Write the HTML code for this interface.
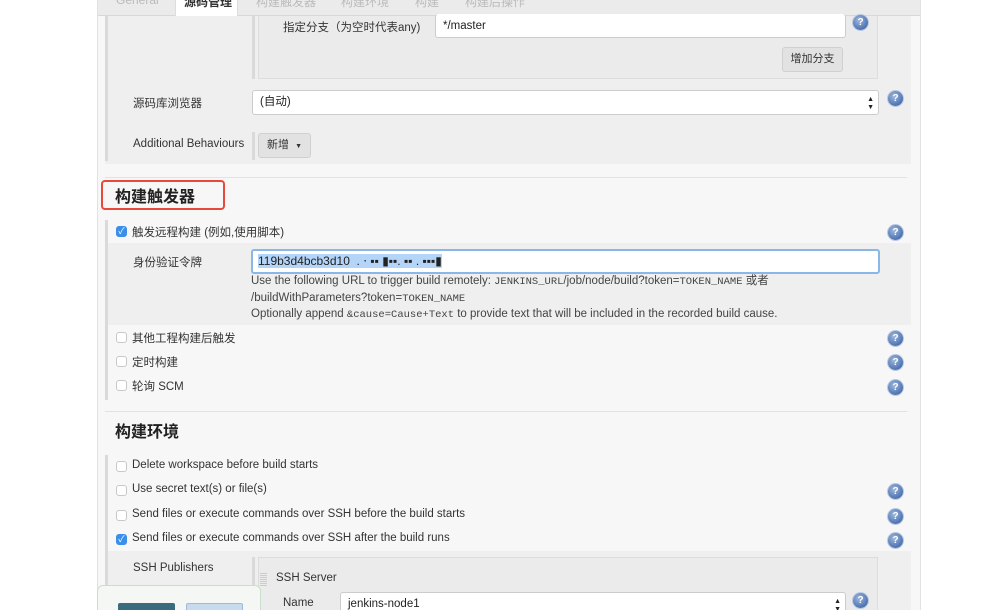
<!DOCTYPE html>
<html style="overflow:hidden;height:610px"><head><meta charset="utf-8"><style>
*{box-sizing:border-box;margin:0;padding:0}
html,body{width:1000px;height:610px;overflow:hidden}
body{background:#fff;font-family:"Liberation Sans","Noto Sans CJK SC",sans-serif;font-size:11.5px;color:#333;position:relative}
.a{position:absolute}
.help{position:absolute;width:15px;height:15px;border-radius:50%;background:radial-gradient(circle at 40% 35%,#9fb8dd,#4d73b0 70%,#3a5f9c);color:#fff;font:bold 10px/15px "Liberation Sans",sans-serif;text-align:center;box-shadow:0 0 0 1px #b9c9e3}
.cb{position:absolute;width:11px;height:11px;border:1px solid #c8c8c8;border-radius:3px;background:#fff}
.cb.on{background:#3b8fe8;border-color:#3b8fe8;color:#fff;font-size:9px;line-height:9px;text-align:center}
.inp{position:absolute;background:#fff;border:1px solid #ccc;border-radius:3px;font-size:11.5px;padding-left:7px;color:#222}
.bar{position:absolute;background:#dadada;width:3px}
.mono{font-family:"Liberation Mono",monospace;font-size:10.5px}
</style></head><body>
<div class="a" style="left:97px;top:0;width:824px;height:610px;background:#f7f7f7;border-left:1px solid #e2e2e2;border-right:1px solid #e2e2e2"></div>
<div class="a" style="left:98px;top:0;width:822px;height:16px;background:#ebebeb;border-bottom:1px solid #d8d8d8"></div>
<div class="a" style="left:175px;top:0;width:63px;height:16px;background:#fff;border-left:1px solid #ddd;border-right:1px solid #ddd"></div>
<div class="a" style="left:116px;top:-7px;color:#bbb;font-size:12px">General</div>
<div class="a" style="left:184px;top:-7px;color:#333;font-size:12px;font-weight:bold">源码管理</div>
<div class="a" style="left:256px;top:-7px;color:#bbb;font-size:12px">构建触发器</div>
<div class="a" style="left:341px;top:-7px;color:#bbb;font-size:12px">构建环境</div>
<div class="a" style="left:415px;top:-7px;color:#bbb;font-size:12px">构建</div>
<div class="a" style="left:465px;top:-7px;color:#bbb;font-size:12px">构建后操作</div>
<div class="a" style="left:105px;top:16px;width:806px;height:148px;background:#efefef"></div>
<div class="bar" style="left:105px;top:16px;height:145px"></div>
<div class="bar" style="left:252px;top:16px;height:63px"></div>
<div class="a" style="left:258px;top:16px;width:620px;height:63px;background:#ebebeb;border:1px solid #ddd;border-top:none"></div>
<div class="a" style="left:283px;top:19px">指定分支（为空时代表any)</div>
<div class="inp" style="left:435px;top:14px;width:411px;height:24px;line-height:24px;border-top:none">*/master</div>
<div class="help" style="left:853px;top:15px">?</div>
<div class="a" style="left:782px;top:47px;width:61px;height:25px;background:#e2e2e2;border:1px solid #d0d0d0;border-radius:3px;text-align:center;line-height:23px;font-size:11px">增加分支</div>
<div class="a" style="left:133px;top:95px">源码库浏览器</div>
<div class="inp" style="left:252px;top:90px;width:627px;height:25px;line-height:23px">(自动)<span style="position:absolute;right:4px;top:0;font-size:7px;line-height:8px;padding-top:5px">▲<br>▼</span></div>
<div class="help" style="left:888px;top:91px">?</div>
<div class="a" style="left:133px;top:138px">Additional Behaviours</div>
<div class="bar" style="left:252px;top:132px;height:28px"></div>
<div class="a" style="left:258px;top:133px;width:53px;height:25px;background:#e2e2e2;border:1px solid #d0d0d0;border-radius:3px;line-height:23px;padding-left:8px;font-size:11px">新增 <span style="font-size:7px;margin-left:3px">▼</span></div>
<div class="a" style="left:105px;top:177px;width:802px;height:1px;background:#e2e2e2"></div>
<div class="a" style="left:101px;top:180px;width:124px;height:30px;border:2px solid #e8493b;border-radius:4px"></div>
<div class="a" style="left:115px;top:183px;font-size:16px;font-weight:bold;color:#222">构建触发器</div>
<div class="bar" style="left:105px;top:220px;height:180px"></div>
<div class="cb on" style="left:116px;top:226px">✓</div>
<div class="a" style="left:132px;top:224px">触发远程构建 (例如,使用脚本)</div>
<div class="help" style="left:888px;top:225px">?</div>
<div class="a" style="left:108px;top:243px;width:803px;height:82px;background:#efefef"></div>
<div class="a" style="left:133px;top:254px">身份验证令牌</div>
<div class="inp" style="left:251px;top:249px;width:629px;height:25px;border:2px solid #8ab6e8;line-height:21px;padding-left:5px;font-size:12px"><span style="background:#b4d4f8">119b3d4bcb3d10 &nbsp;. ⋅ ▪▪ ▮▪▪. ▪▪ . ▪▪▪▮</span></div>
<div class="a" style="left:251px;top:274px;line-height:15.5px;color:#444">Use the following URL to trigger build remotely: <span class="mono">JENKINS_URL</span>/job/node/build?token=<span class="mono">TOKEN_NAME</span> 或者<br>/buildWithParameters?token=<span class="mono">TOKEN_NAME</span><br>Optionally append <span class="mono">&amp;cause=Cause+Text</span> to provide text that will be included in the recorded build cause.</div>
<div class="cb" style="left:116px;top:332px"></div><div class="a" style="left:132px;top:330px">其他工程构建后触发</div><div class="help" style="left:888px;top:331px">?</div>
<div class="cb" style="left:116px;top:356px"></div><div class="a" style="left:132px;top:354px">定时构建</div><div class="help" style="left:888px;top:355px">?</div>
<div class="cb" style="left:116px;top:380px"></div><div class="a" style="left:132px;top:378px">轮询 SCM</div><div class="help" style="left:888px;top:380px">?</div>
<div class="a" style="left:105px;top:411px;width:802px;height:1px;background:#e2e2e2"></div>
<div class="a" style="left:115px;top:418px;font-size:16px;font-weight:bold;color:#222">构建环境</div>
<div class="bar" style="left:105px;top:455px;height:155px"></div>
<div class="cb" style="left:116px;top:461px"></div><div class="a" style="left:132px;top:459px">Delete workspace before build starts</div>
<div class="cb" style="left:116px;top:485px"></div><div class="a" style="left:132px;top:483px">Use secret text(s) or file(s)</div><div class="help" style="left:888px;top:484px">?</div>
<div class="cb" style="left:116px;top:510px"></div><div class="a" style="left:132px;top:508px">Send files or execute commands over SSH before the build starts</div><div class="help" style="left:888px;top:509px">?</div>
<div class="cb on" style="left:116px;top:534px">✓</div><div class="a" style="left:132px;top:532px">Send files or execute commands over SSH after the build runs</div><div class="help" style="left:888px;top:533px">?</div>
<div class="a" style="left:108px;top:551px;width:803px;height:59px;background:#efefef"></div>
<div class="a" style="left:133px;top:562px">SSH Publishers</div>
<div class="bar" style="left:252px;top:557px;height:53px"></div>
<div class="a" style="left:258px;top:557px;width:620px;height:53px;background:#ebebeb;border:1px solid #ddd;border-bottom:none"></div>
<div class="a" style="left:260px;top:573px;width:7px;height:13px;background:repeating-linear-gradient(0deg,#ccc 0 1px,transparent 1px 2px)"></div>
<div class="a" style="left:276px;top:572px">SSH Server</div>
<div class="a" style="left:283px;top:597px">Name</div>
<div class="inp" style="left:340px;top:592px;width:506px;height:18px;line-height:23px;border-bottom:none;border-radius:3px 3px 0 0">jenkins-node1<span style="position:absolute;right:4px;top:0;font-size:7px;line-height:8px;padding-top:5px">▲<br>▼</span></div>
<div class="help" style="left:853px;top:593px">?</div>
<div class="a" style="left:97px;top:585px;width:164px;height:25px;background:#f4f7f4;border:1px solid #c9dfcc;border-bottom:none;border-radius:6px 6px 0 0"></div>
<div class="a" style="left:118px;top:603px;width:57px;height:7px;background:#3b6c7e;border-radius:2px 2px 0 0"></div>
<div class="a" style="left:186px;top:603px;width:57px;height:7px;background:#c9daef;border:1px solid #9fbbe0;border-bottom:none;border-radius:2px 2px 0 0"></div>
</body></html>
